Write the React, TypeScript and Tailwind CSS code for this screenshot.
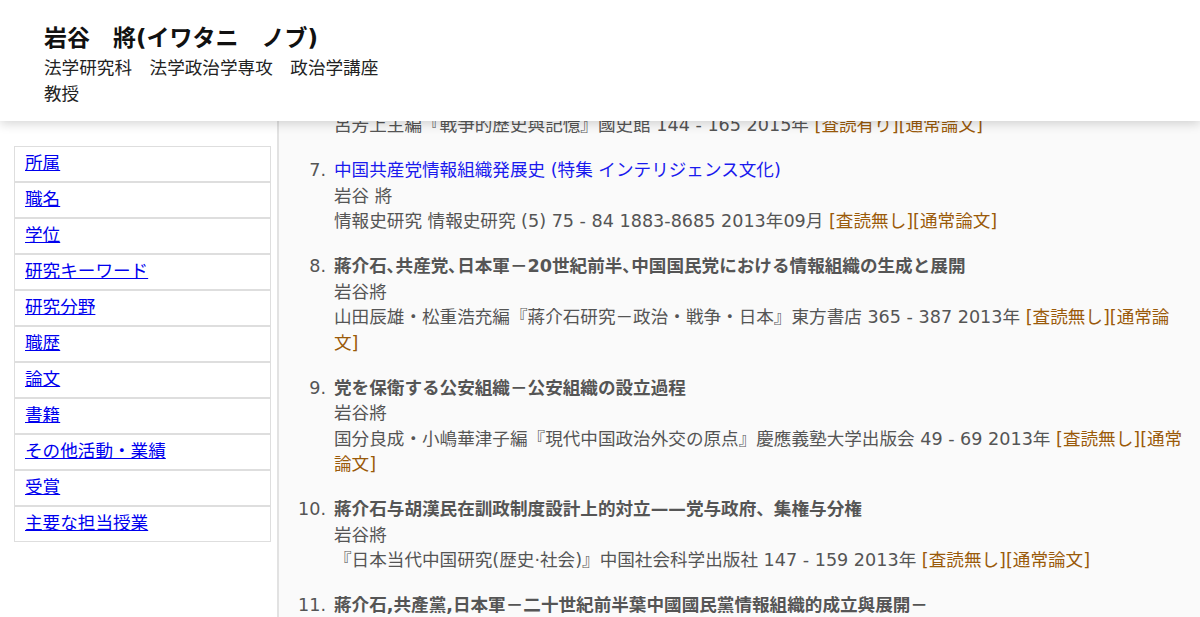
import React from "react";

const menu = [
  "所属",
  "職名",
  "学位",
  "研究キーワード",
  "研究分野",
  "職歴",
  "論文",
  "書籍",
  "その他活動・業績",
  "受賞",
  "主要な担当授業",
];

type Item = {
  n: string;
  title: string;
  link?: boolean;
  author: string;
  pub: React.ReactNode;
};

const Tag = ({ children }: { children: React.ReactNode }) => (
  <span className="text-[#9a5a0a]">{children}</span>
);

const items: Item[] = [
  {
    n: "7.",
    title: "中国共産党情報組織発展史 (特集 インテリジェンス文化)",
    link: true,
    author: "岩谷 將",
    pub: (
      <>
        情報史研究 情報史研究 (5) 75 - 84 1883-8685 2013年09月{" "}
        <Tag>[査読無し][通常論文]</Tag>
      </>
    ),
  },
  {
    n: "8.",
    title:
      "蔣介石､共産党､日本軍－20世紀前半､中国国民党における情報組織の生成と展開",
    author: "岩谷將",
    pub: (
      <>
        山田辰雄・松重浩充編『蔣介石研究－政治・戦争・日本』東方書店 365 - 387 2013年{" "}
        <Tag>
          [査読無し][通常論
          <br />
          文]
        </Tag>
      </>
    ),
  },
  {
    n: "9.",
    title: "党を保衛する公安組織－公安組織の設立過程",
    author: "岩谷將",
    pub: (
      <>
        国分良成・小嶋華津子編『現代中国政治外交の原点』慶應義塾大学出版会 49 - 69 2013年{" "}
        <Tag>
          [査読無し][通常
          <br />
          論文]
        </Tag>
      </>
    ),
  },
  {
    n: "10.",
    title: "蔣介石与胡漢民在訓政制度設計上的対立——党与政府、集権与分権",
    author: "岩谷將",
    pub: (
      <>
        『日本当代中国研究(歴史·社会)』中国社会科学出版社 147 - 159 2013年{" "}
        <Tag>[査読無し][通常論文]</Tag>
      </>
    ),
  },
  {
    n: "11.",
    title: "蔣介石,共產黨,日本軍－二十世紀前半葉中國國民黨情報組織的成立與展開－",
    author: "岩谷將",
    pub: <>国史館 2013年</>,
  },
];

export default function App() {
  return (
    <div className="relative h-[617px] w-[1200px] overflow-hidden bg-white font-['DejaVu_Sans','Noto_Sans_CJK_JP',sans-serif] text-[17.6px] leading-[25.5px]">
      {/* Header overlay */}
      <header className="absolute inset-x-0 top-0 z-10 h-[121px] bg-white pl-[44px] pt-[22px] shadow-[0_3px_10px_rgba(0,0,0,0.16)]">
        <div className="text-[23px] font-bold leading-[32px] text-[#111]">
          岩谷　將(イワタニ　ノブ)
        </div>
        <div className="mt-[2px] text-[#222]">法学研究科　法学政治学専攻　政治学講座</div>
        <div className="text-[#222]">教授</div>
      </header>

      <div className="flex h-full">
        {/* Sidebar */}
        <aside className="w-[279px] shrink-0 border-r-2 border-[#e2e2e2] bg-white pl-[14px] pr-[6px] pt-[146px]">
          <ul className="w-[257px]">
            {menu.map((m) => (
              <li
                key={m}
                className="flex h-[36px] items-center border border-[#dedede] pl-[10px]"
              >
                <a href="#" className="text-[#0000ee] underline">
                  {m}
                </a>
              </li>
            ))}
          </ul>
        </aside>

        {/* Main */}
        <main className="flex-1 bg-[#fafafa] pr-[2px] pt-[113px] text-[#555]">
          <div className="whitespace-nowrap pl-[55px]">
            呂芳上主編『戰爭的歷史與記憶』國史館 144 - 165 2015年{" "}
            <Tag>[査読有り][通常論文]</Tag>
          </div>
          {items.map((it) => (
            <div key={it.n} className="mt-[19.6px] flex">
              <div className="w-[55px] shrink-0 pr-[8px] text-right">{it.n}</div>
              <div className="min-w-0 flex-1">
                {it.link ? (
                  <div>
                    <a href="#" className="text-[#1a1aee]">
                      {it.title}
                    </a>
                  </div>
                ) : (
                  <div className="font-bold">{it.title}</div>
                )}
                <div>{it.author}</div>
                <div className="whitespace-nowrap">{it.pub}</div>
              </div>
            </div>
          ))}
        </main>
      </div>
    </div>
  );
}
